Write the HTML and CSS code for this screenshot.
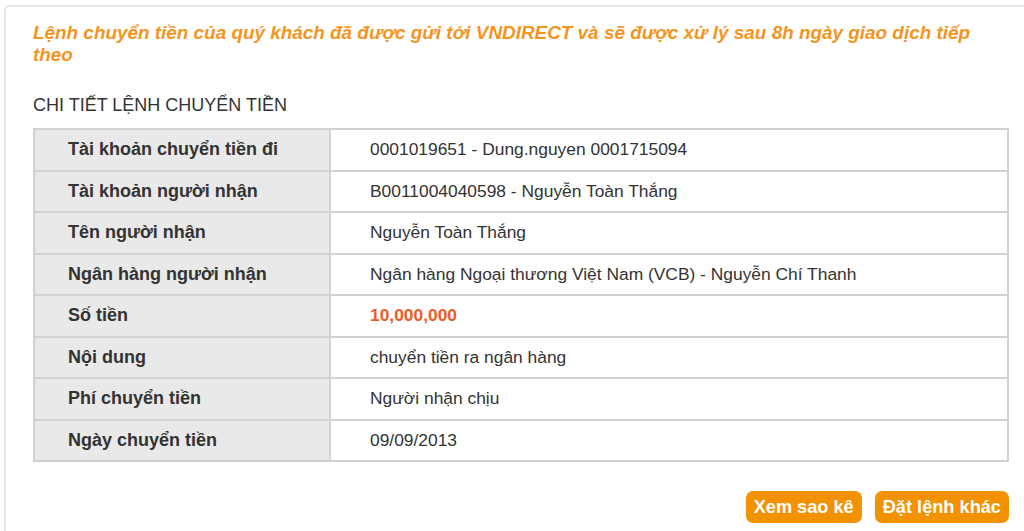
FILE: index.html
```html
<!DOCTYPE html>
<html lang="vi">
<head>
<meta charset="utf-8">
<link rel="stylesheet" href="styles.css">
</head>
<body>
<div class="card">
  <p class="notice">Lệnh chuyển tiền của quý khách đã được gửi tới VNDIRECT và sẽ được xử lý sau 8h ngày giao dịch tiếp theo</p>
  <h2 class="section-title">CHI TIẾT LỆNH CHUYỂN TIỀN</h2>
  <table class="detail">
    <tr><th>Tài khoản chuyển tiền đi</th><td>0001019651 - Dung.nguyen 0001715094</td></tr>
    <tr><th>Tài khoản người nhận</th><td>B0011004040598 - Nguyễn Toàn Thắng</td></tr>
    <tr><th>Tên người nhận</th><td>Nguyễn Toàn Thắng</td></tr>
    <tr><th>Ngân hàng người nhận</th><td>Ngân hàng Ngoại thương Việt Nam (VCB) - Nguyễn Chí Thanh</td></tr>
    <tr><th>Số tiền</th><td class="amount">10,000,000</td></tr>
    <tr><th>Nội dung</th><td>chuyển tiền ra ngân hàng</td></tr>
    <tr><th>Phí chuyển tiền</th><td>Người nhận chịu</td></tr>
    <tr><th>Ngày chuyển tiền</th><td>09/09/2013</td></tr>
  </table>
  <div class="actions">
    <button class="btn">Xem sao kê</button>
    <button class="btn">Đặt lệnh khác</button>
  </div>
</div>
</body>
</html>
```
FILE: styles.css
```css
html, body {
  margin: 0;
  padding: 0;
  overflow: hidden;
  background: #ffffff;
}
body {
  font-family: "Liberation Sans", Arial, sans-serif;
  color: #333333;
}
.card {
  margin: 5px 0 0 4px;
  width: 1040px;
  height: 600px;
  box-sizing: border-box;
  border: 2px solid #e6e6e6;
  border-radius: 6px;
  padding: 15px 0 0 27px;
}
.notice {
  width: 975px;
  margin: 0;
  font-size: 18.9px;
  line-height: 22px;
  font-weight: bold;
  font-style: italic;
  color: #f7941d;
}
.section-title {
  margin: 29px 0 0 0;
  font-size: 18px;
  line-height: 20px;
  font-weight: normal;
  color: #333333;
}
.detail {
  margin-top: 13px;
  width: 976px;
  border-collapse: collapse;
  font-size: 17.4px;
}
.detail th, .detail td {
  border: 2px solid #d2d2d2;
  height: 39.5px;
  padding: 0;
  vertical-align: middle;
}
.detail th {
  width: 261px;
  padding-left: 33px;
  background: #e9e9e9;
  text-align: left;
  font-size: 18px;
  font-weight: bold;
  color: #333333;
}
.detail td {
  padding-left: 39px;
  color: #333333;
}
.detail td.amount {
  color: #f15a24;
  font-weight: bold;
}
.actions {
  width: 976px;
  margin-top: 29px;
  display: flex;
  justify-content: flex-end;
  gap: 13px;
}
.btn {
  height: 32px;
  padding: 0 8px;
  border: none;
  border-radius: 7px;
  background: #f39200;
  color: #ffffff;
  font-family: "Liberation Sans", Arial, sans-serif;
  font-size: 18.2px;
  font-weight: bold;
}
```
